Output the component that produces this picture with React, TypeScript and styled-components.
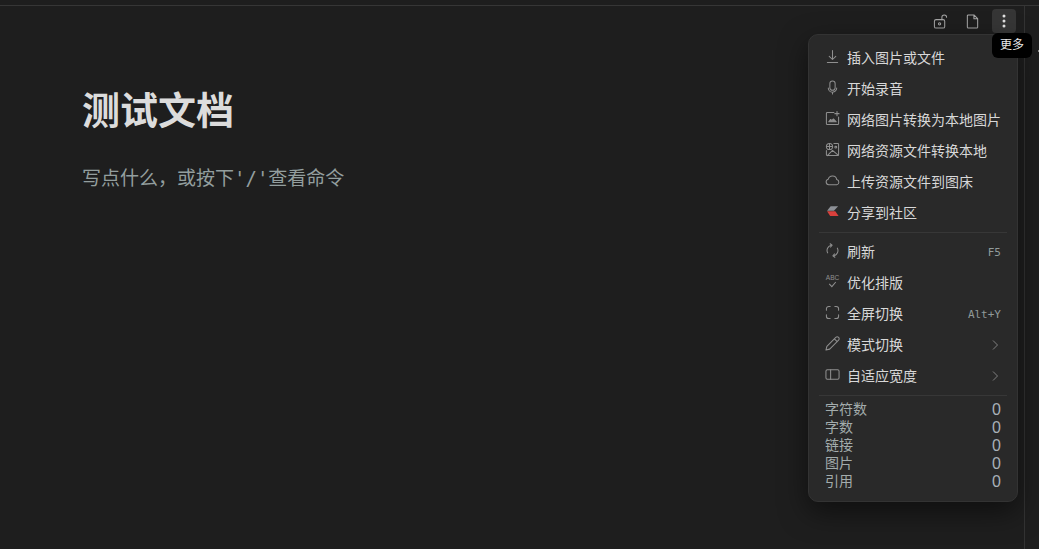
import React from "react";
import styled, { createGlobalStyle } from "styled-components";

const GlobalStyle = createGlobalStyle`
  html, body {
    margin: 0;
    height: 100%;
    background: #1e1e1e;
    overflow: hidden;
  }
  #root {
    height: 100%;
  }
`;

const Page = styled.div`
  position: relative;
  width: 1039px;
  height: 549px;
  display: flex;
  flex-direction: column;
  background: #1e1e1e;
  color: #dadada;
  font-family: "Liberation Sans", "Noto Sans CJK SC", sans-serif;
`;

const TopStrip = styled.div`
  height: 5px;
  flex: none;
  border-bottom: 1px solid #363636;
`;

const Body = styled.div`
  flex: 1;
  display: flex;
  min-height: 0;
`;

const Editor = styled.main`
  flex: 1;
  min-width: 0;
  display: flex;
  flex-direction: column;
`;

const ScrollGutter = styled.div`
  width: 14px;
  flex: none;
  border-left: 1px solid #333;
`;

const Toolbar = styled.div`
  height: 24px;
  margin-top: 3px;
  padding-right: 8px;
  display: flex;
  justify-content: flex-end;
  align-items: center;
  gap: 8px;
`;

const ToolButton = styled.button<{ $active?: boolean }>`
  width: 24px;
  height: 24px;
  padding: 0;
  border: none;
  border-radius: 4px;
  display: flex;
  align-items: center;
  justify-content: center;
  color: ${({ $active }) => ($active ? "#e0e0e0" : "#a6a6a6")};
  background: ${({ $active }) => ($active ? "#363636" : "transparent")};
`;

const Doc = styled.div`
  padding: 50px 0 0 82px;
`;

const Title = styled.h1`
  margin: 0;
  font-size: 38px;
  line-height: 56px;
  font-weight: 700;
  color: #dcdcdc;
`;

const Placeholder = styled.p`
  margin: 25px 0 0;
  font-size: 19px;
  line-height: 28px;
  color: #939e9e;
`;

const Quoted = styled.span`
  font-family: "DejaVu Sans Mono", monospace;
`;

const Tooltip = styled.div`
  position: absolute;
  left: 992px;
  top: 33px;
  width: 40px;
  height: 25px;
  z-index: 3;
  border-radius: 6px;
  background: #000;
  color: #e8e8e8;
  font-size: 12px;
  line-height: 25px;
  text-align: center;
`;

const EdgeMark = styled.div`
  position: absolute;
  right: 0;
  top: 50px;
  width: 1px;
  height: 2px;
  background: #8a8a8a;
`;

const Menu = styled.div`
  position: absolute;
  left: 808px;
  top: 34px;
  width: 210px;
  height: 468px;
  z-index: 2;
  box-sizing: border-box;
  padding: 6px 10px 0;
  background: #292929;
  border: 1px solid #333;
  border-radius: 10px;
  box-shadow: 0 10px 28px rgba(0, 0, 0, 0.5);
`;

const MenuItem = styled.div`
  height: 31px;
  padding: 0 6px;
  display: flex;
  align-items: center;
  font-size: 14px;
  color: #d8d8d8;
`;

const IconSlot = styled.span`
  width: 15px;
  height: 16px;
  flex: none;
  margin-right: 7px;
  color: #8f8f8f;
  display: flex;
  align-items: center;
  justify-content: center;
`;

const ItemLabel = styled.span`
  flex: 1;
  white-space: nowrap;
`;

const Shortcut = styled.span`
  padding-top: 3px;
  font-family: "DejaVu Sans Mono", "Liberation Mono", monospace;
  font-size: 11px;
  color: #909a9a;
`;

const Chevron = styled.span`
  display: flex;
  padding-top: 2px;
  color: #808080;
`;

const Divider = styled.div`
  height: 1px;
  margin: 5px 0 2px;
  background: #373737;
`;

const Stats = styled.div`
  padding: 1px 6px 0;
`;

const StatRow = styled.div`
  height: 18px;
  display: flex;
  justify-content: space-between;
  align-items: center;
  font-size: 14px;
  color: #a3acac;
`;

const StatValue = styled.span`
  padding-top: 3px;
  font-size: 16px;
  line-height: 18px;
  color: #a8b0b8;
`;

const Svg: React.FC<{ size?: number; children: React.ReactNode }> = ({ size = 15, children }) => (
  <svg
    width={size}
    height={size}
    viewBox="0 0 16 16"
    fill="none"
    stroke="currentColor"
    strokeWidth="1.1"
    strokeLinecap="round"
    strokeLinejoin="round"
  >
    {children}
  </svg>
);

const items: { label: string; icon: React.ReactNode }[] = [
  {
    label: "插入图片或文件",
    icon: (
      <Svg>
        <path d="M8 1.500v9.500M4.500 7.800 8 11.200l3.500-3.400M2.500 14.500h11" />
      </Svg>
    ),
  },
  {
    label: "开始录音",
    icon: (
      <Svg>
        <rect x="5.200" y="1" width="5.600" height="10" rx="2.800" />
        <path d="M3.500 8.500a4.500 4.500 0 0 0 9 0M8 13v2" />
      </Svg>
    ),
  },
  {
    label: "网络图片转换为本地图片",
    icon: (
      <Svg>
        <path d="M9.500 1.500H2.500a1 1 0 0 0-1 1v11a1 1 0 0 0 1 1h11a1 1 0 0 0 1-1V6.500" />
        <path d="M12.800 .5v4.500M10.500 2.800h4.500" />
        <path d="M4 11.500 6 9l1.300 1.300L9 8.500l3 3z" fill="currentColor" />
      </Svg>
    ),
  },
  {
    label: "网络资源文件转换本地",
    icon: (
      <Svg>
        <path d="M9.500 1.500h4a1 1 0 0 1 1 1v11a1 1 0 0 1-1 1h-11a1 1 0 0 1-1-1V9" />
        <circle cx="4.800" cy="4.800" r="3.300" />
        <path d="M1.500 4.800h6.600M4.800 1.500v6.600" />
        <path d="M2.500 14.500 8 9l6 5" />
        <circle cx="11.500" cy="5.500" r="1" />
      </Svg>
    ),
  },
  {
    label: "上传资源文件到图床",
    icon: (
      <Svg>
        <path d="M4 12.500a3 3 0 0 1-.5-5.900 4.600 4.600 0 0 1 9 .4 2.800 2.800 0 0 1 0 5.500z" />
      </Svg>
    ),
  },
  {
    label: "分享到社区",
    icon: (
      <svg width="15" height="15" viewBox="0 0 16 16">
        <path d="M6 2.500h8L9.500 7.300H2.200z" fill="#8d9096" />
        <path d="M2.200 7.800h8.800l3.500 5H5.500z" fill="#d9403c" />
      </svg>
    ),
  },
];

const viewItems: { label: string; icon: React.ReactNode; shortcut?: string; sub?: boolean }[] = [
  {
    label: "刷新",
    shortcut: "F5",
    icon: (
      <Svg>
        <path d="M2.800 10.500A5.800 5.800 0 0 1 6.500 2.300M13.200 5.500a5.800 5.800 0 0 1-3.700 8.200" />
        <path d="M5.500 .8 7.600 2.400 5.800 4.300M10.500 15.200 8.400 13.600l1.800-1.900" />
      </Svg>
    ),
  },
  {
    label: "优化排版",
    icon: (
      <svg width="15" height="15" viewBox="0 0 16 16">
        <text x="8" y="6" textAnchor="middle" fontSize="7" fontFamily="Liberation Sans" fill="currentColor">
          ABC
        </text>
        <path d="M4.500 10.500 7.300 13.500l4.200-5" fill="none" stroke="currentColor" strokeWidth="1.100" />
      </svg>
    ),
  },
  {
    label: "全屏切换",
    shortcut: "Alt+Y",
    icon: (
      <Svg>
        <path d="M1.500 5.500V4A2.500 2.500 0 0 1 4 1.500h1.500M10.500 1.500H12A2.500 2.500 0 0 1 14.500 4v1.500M14.500 10.500V12a2.500 2.500 0 0 1-2.500 2.500h-1.500M5.500 14.500H4A2.500 2.500 0 0 1 1.500 12v-1.500" />
      </Svg>
    ),
  },
  {
    label: "模式切换",
    sub: true,
    icon: (
      <Svg>
        <path d="M1 15 2 11 11.500 1.500a1.700 1.700 0 0 1 3 3L5 14zM10 3l3 3" />
      </Svg>
    ),
  },
  {
    label: "自适应宽度",
    sub: true,
    icon: (
      <Svg>
        <rect x="1" y="3" width="14" height="10" rx="1.500" />
        <path d="M6 3v10" />
      </Svg>
    ),
  },
];

const stats = ["字符数", "字数", "链接", "图片", "引用"];

const App: React.FC = () => (
  <Page>
    <GlobalStyle />
    <TopStrip />
    <Body>
      <Editor>
        <Toolbar>
          <ToolButton aria-label="lock">
            <Svg>
              <rect x="1.500" y="6" width="11" height="9" rx="1.800" />
              <path d="M9.500 6V3.500a2.500 2.500 0 0 1 5 0" />
              <circle cx="7" cy="10.500" r="1.200" />
            </Svg>
          </ToolButton>
          <ToolButton aria-label="doc">
            <Svg>
              <path d="M9.500 1H3.500a1 1 0 0 0-1 1v12a1 1 0 0 0 1 1h9a1 1 0 0 0 1-1V5zM9.500 1V5h4" />
            </Svg>
          </ToolButton>
          <ToolButton $active aria-label="more">
            <svg width="16" height="16" viewBox="0 0 16 16" fill="currentColor">
              <circle cx="8" cy="3" r="1.500" />
              <circle cx="8" cy="8" r="1.500" />
              <circle cx="8" cy="13" r="1.500" />
            </svg>
          </ToolButton>
        </Toolbar>
        <Doc>
          <Title>测试文档</Title>
          <Placeholder>
            写点什么，或按下<Quoted>'/'</Quoted>查看命令
          </Placeholder>
        </Doc>
      </Editor>
      <ScrollGutter />
    </Body>
    <Tooltip>更多</Tooltip>
    <EdgeMark />
    <Menu>
      {items.map((item) => (
        <MenuItem key={item.label}>
          <IconSlot>{item.icon}</IconSlot>
          <ItemLabel>{item.label}</ItemLabel>
        </MenuItem>
      ))}
      <Divider />
      {viewItems.map((item) => (
        <MenuItem key={item.label}>
          <IconSlot>{item.icon}</IconSlot>
          <ItemLabel>{item.label}</ItemLabel>
          {item.shortcut && <Shortcut>{item.shortcut}</Shortcut>}
          {item.sub && (
            <Chevron>
              <svg width="12" height="12" viewBox="0 0 12 12" fill="none" stroke="currentColor">
                <path d="M4 1.500 8.500 6 4 10.500" />
              </svg>
            </Chevron>
          )}
        </MenuItem>
      ))}
      <Divider />
      <Stats>
        {stats.map((s) => (
          <StatRow key={s}>
            <span>{s}</span>
            <StatValue>0</StatValue>
          </StatRow>
        ))}
      </Stats>
    </Menu>
  </Page>
);

export default App;
